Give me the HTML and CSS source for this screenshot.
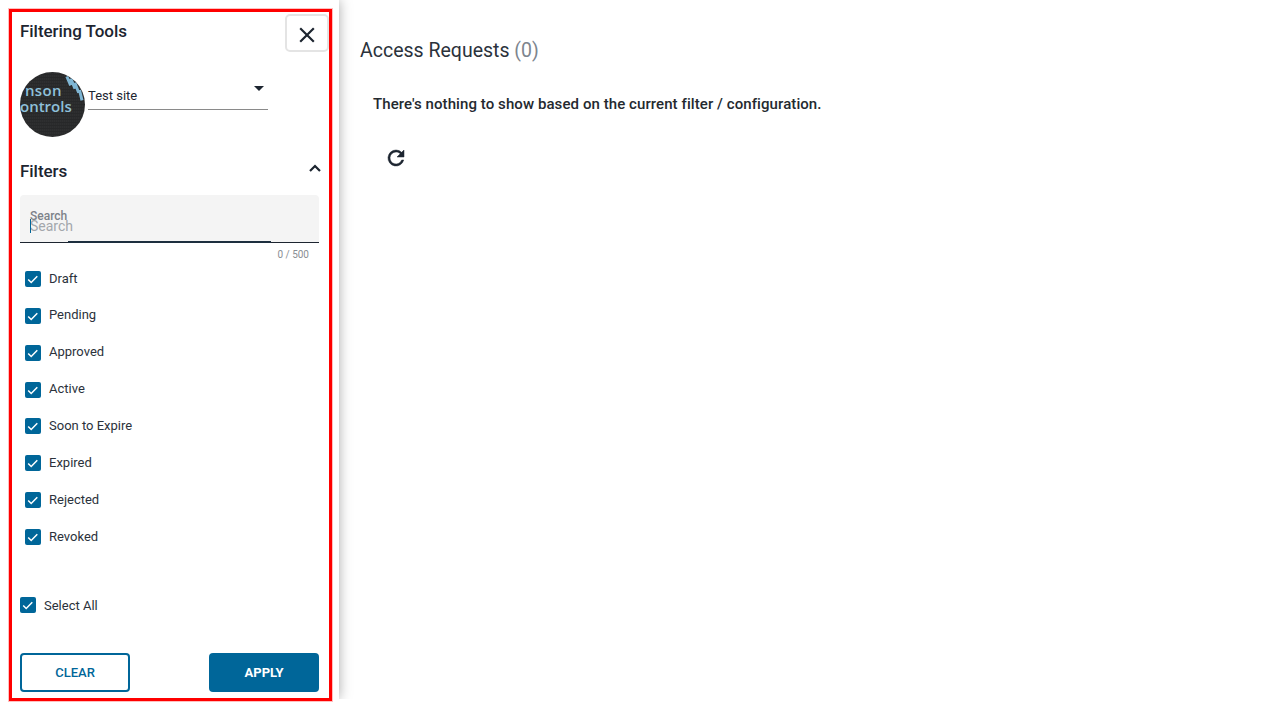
FILE: index.html
```html
<!DOCTYPE html>
<html lang="en">
<head>
<meta charset="utf-8">
<title>Access Requests</title>
<link rel="stylesheet" href="styles.css">
</head>
<body>
<div class="page">
  <div class="highlight"></div>
  <aside class="panel">
    <div class="head">
      <h2 class="panel-title">Filtering Tools</h2>
      <button class="close" aria-label="Close">
        <svg width="16" height="16" viewBox="0 0 16 16"><path d="M1.2 1.2 14.8 14.8M14.8 1.2 1.2 14.8" stroke="#1d2530" stroke-width="2.2" fill="none"/></svg>
      </button>
    </div>
    <div class="site">
      <div class="avatar">
        <svg width="65" height="65" viewBox="0 0 65 65">
          <defs>
            <clipPath id="c"><circle cx="32.5" cy="32.5" r="32.5"/></clipPath>
            <pattern id="weave" width="2" height="3" patternUnits="userSpaceOnUse">
              <rect width="2" height="3" fill="#2a2b2c"/>
              <rect width="1" height="3" fill="#2e2f30"/>
              <rect y="2" width="2" height="1" fill="#272829"/>
            </pattern>
          </defs>
          <g clip-path="url(#c)">
            <rect width="65" height="65" fill="url(#weave)"/>
            <path d="M46.8 4.5 50.7 13.3M50.8 6.5 55 16.7M54.8 10.7 58.7 20.7M59.5 18 62 28.3" stroke="#7fb6d4" stroke-width="3" fill="none"/>
            <text x="5" y="24" class="logo-text logo-short">nson</text>
            <text x="0" y="40" class="logo-text">ontrols</text>
          </g>
        </svg>
      </div>
      <div class="select">
        <span class="select-value">Test site</span>
        <span class="caret"></span>
      </div>
    </div>
    <div class="filters-head">
      <h2 class="panel-title">Filters</h2>
      <svg class="chevron" width="12" height="8" viewBox="0 0 12 8"><path d="M1 7 6 2 11 7" stroke="#1d2530" stroke-width="2.2" fill="none"/></svg>
    </div>
    <div class="search">
      <span class="search-label">Search</span>
      <span class="search-input"><i class="cursor"></i>Search</span>
      <i class="search-focus"></i>
    </div>
    <div class="counter">0 / 500</div>
    <ul class="checks">
      <li class="check"><span class="box"><svg width="16" height="16" viewBox="0 0 16 16"><path d="M3.2 8.5 6.2 11.5 12.3 5.2" stroke="#fff" stroke-width="1.5" fill="none"/></svg></span>Draft</li>
      <li class="check"><span class="box"><svg width="16" height="16" viewBox="0 0 16 16"><path d="M3.2 8.5 6.2 11.5 12.3 5.2" stroke="#fff" stroke-width="1.5" fill="none"/></svg></span>Pending</li>
      <li class="check"><span class="box"><svg width="16" height="16" viewBox="0 0 16 16"><path d="M3.2 8.5 6.2 11.5 12.3 5.2" stroke="#fff" stroke-width="1.5" fill="none"/></svg></span>Approved</li>
      <li class="check"><span class="box"><svg width="16" height="16" viewBox="0 0 16 16"><path d="M3.2 8.5 6.2 11.5 12.3 5.2" stroke="#fff" stroke-width="1.5" fill="none"/></svg></span>Active</li>
      <li class="check"><span class="box"><svg width="16" height="16" viewBox="0 0 16 16"><path d="M3.2 8.5 6.2 11.5 12.3 5.2" stroke="#fff" stroke-width="1.5" fill="none"/></svg></span>Soon to Expire</li>
      <li class="check"><span class="box"><svg width="16" height="16" viewBox="0 0 16 16"><path d="M3.2 8.5 6.2 11.5 12.3 5.2" stroke="#fff" stroke-width="1.5" fill="none"/></svg></span>Expired</li>
      <li class="check"><span class="box"><svg width="16" height="16" viewBox="0 0 16 16"><path d="M3.2 8.5 6.2 11.5 12.3 5.2" stroke="#fff" stroke-width="1.5" fill="none"/></svg></span>Rejected</li>
      <li class="check"><span class="box"><svg width="16" height="16" viewBox="0 0 16 16"><path d="M3.2 8.5 6.2 11.5 12.3 5.2" stroke="#fff" stroke-width="1.5" fill="none"/></svg></span>Revoked</li>
    </ul>
    <div class="check select-all"><span class="box"><svg width="16" height="16" viewBox="0 0 16 16"><path d="M3.2 8.5 6.2 11.5 12.3 5.2" stroke="#fff" stroke-width="1.5" fill="none"/></svg></span>Select All</div>
    <div class="actions">
      <button class="btn btn-clear">CLEAR</button>
      <button class="btn btn-apply">APPLY</button>
    </div>
  </aside>
  <main class="content">
    <h1 class="title">Access Requests <span class="count">(0)</span></h1>
    <p class="empty">There's nothing to show based on the current filter / configuration.</p>
    <button class="refresh" aria-label="Refresh">
      <svg width="24" height="24" viewBox="0 0 24 24"><path fill="#1d2530" stroke="#1d2530" stroke-width=".5" d="M17.65 6.35A7.96 7.96 0 0 0 12 4a8 8 0 1 0 7.73 10h-2.08A6 6 0 1 1 12 6c1.66 0 3.14.69 4.22 1.78L13 11h7V4l-2.35 2.35z"/></svg>
    </button>
  </main>
</div>
</body>
</html>
```
FILE: styles.css
```css
* { box-sizing: border-box; }
html, body { margin: 0; padding: 0; background: #fff; }
body { font-family: Roboto, "Liberation Sans", sans-serif; color: #1d2530; overflow: hidden; }
.page { position: relative; display: flex; width: 1282px; height: 710px; align-items: flex-start; }

.panel {
  flex: none;
  width: 339px;
  height: 699px;
  padding: 0 20px;
  background: #fff;
  box-shadow: 0 0 12px rgba(0, 0, 0, .34);
  clip-path: inset(0 -20px 0 0);
  display: flex;
  flex-direction: column;
}
.highlight {
  position: absolute;
  z-index: 2;
  left: 9px; top: 9px;
  width: 323px; height: 692px;
  border: 3px solid #f00;
  box-shadow: 0 0 0 1px rgba(255, 0, 0, .25);
  pointer-events: none;
}
.head { display: flex; justify-content: space-between; align-items: flex-start; height: 72px; margin-right: -10px; padding-top: 14px; }
.panel-title { margin: 0; font-size: 17px; font-weight: 500; line-height: 20px; letter-spacing: -.05px; color: #1d2530; padding-top: 7px; }
.close {
  width: 44px; height: 38px; padding: 4px 0 0;
  display: flex; align-items: center; justify-content: center;
  background: #fff;
  border: 2px solid #e4e4e4;
  border-radius: 5px;
}
.site { display: flex; align-items: flex-end; height: 65px; }
.avatar { width: 65px; height: 65px; flex: none; }
.avatar svg { display: block; }
.logo-text { font-family: "Open Sans", sans-serif; font-size: 15px; font-weight: 600; fill: #8fc0da; }
.logo-short { letter-spacing: .3px; }
.select {
  position: relative;
  width: 180px; height: 38px;
  margin: 0 0 27px 3px;
  border-bottom: 1px solid #8a8a8a;
  display: flex; align-items: flex-end;
  font-size: 13px;
}
.select-value { line-height: 16px; padding-bottom: 5px; color: #1d2530; }
.caret {
  position: absolute; right: 4px; top: 14px;
  border-left: 5px solid transparent;
  border-right: 5px solid transparent;
  border-top: 5px solid #1d2530;
}
.filters-head { display: flex; justify-content: space-between; height: 58px; padding-top: 17px; }
.chevron { margin: 10px -2px 0 0; }
.search {
  position: relative;
  height: 48px;
  background: #f4f4f4;
  border-radius: 4px 4px 0 0;
  border-bottom: 1px solid #1d2530;
}
.search-label { position: absolute; left: 10px; top: 14px; font-size: 12px; line-height: 14px; font-weight: 500; color: #7d8289; }
.search-input { position: absolute; left: 10px; top: 23px; font-size: 14px; line-height: 16px; color: #a3a7ac; }
.cursor { position: absolute; left: 0; top: 1px; width: 1px; height: 14px; background: #006699; }
.search-focus { position: absolute; left: 48px; bottom: -1px; width: 203px; height: 2px; background: #1d2f3f; }
.counter { height: 17px; padding: 5px 10px 0 0; text-align: right; font-size: 10px; line-height: 13px; color: #8a8e93; }
.checks { list-style: none; margin: 0; padding: 0 0 0 5px; height: 329px; }
.check { display: flex; align-items: center; height: 36.95px; font-size: 13px; color: #2b323b; }
.checks .check:first-child { height: 36px; }
.box { width: 16px; height: 16px; flex: none; margin-right: 8px; background: #006699; border-radius: 2px; display: flex; }
.checks .check:first-child .box { margin-top: 1px; }
.check .box { margin-top: 2.4px; }
.select-all { height: 32px; }
.select-all .box { margin-top: 0; }
.actions { display: flex; justify-content: space-between; margin-top: 32px; }
.btn {
  width: 110px; height: 39px; padding: 0;
  font-family: Roboto, "Liberation Sans", sans-serif;
  font-size: 13px; font-weight: 700;
  border-radius: 4px;
}
.btn-clear { background: #fff; color: #006699; border: 2px solid #006699; font-weight: 500; }
.btn-apply { background: #006699; color: #fff; border: 0; }

.content { flex: 1; padding: 39px 0 0 21px; }
.title { margin: 0; font-size: 19.5px; font-weight: 400; line-height: 24px; color: #2b323b; }
.count { color: #7d858e; }
.empty { margin: 31px 0 0 13px; font-size: 15px; font-weight: 500; line-height: 20px; letter-spacing: .08px; color: #24292f; }
.refresh { display: block; width: 24px; height: 24px; margin: 32px 0 0 24px; padding: 0; border: 0; background: none; }
.refresh svg { display: block; }
```
